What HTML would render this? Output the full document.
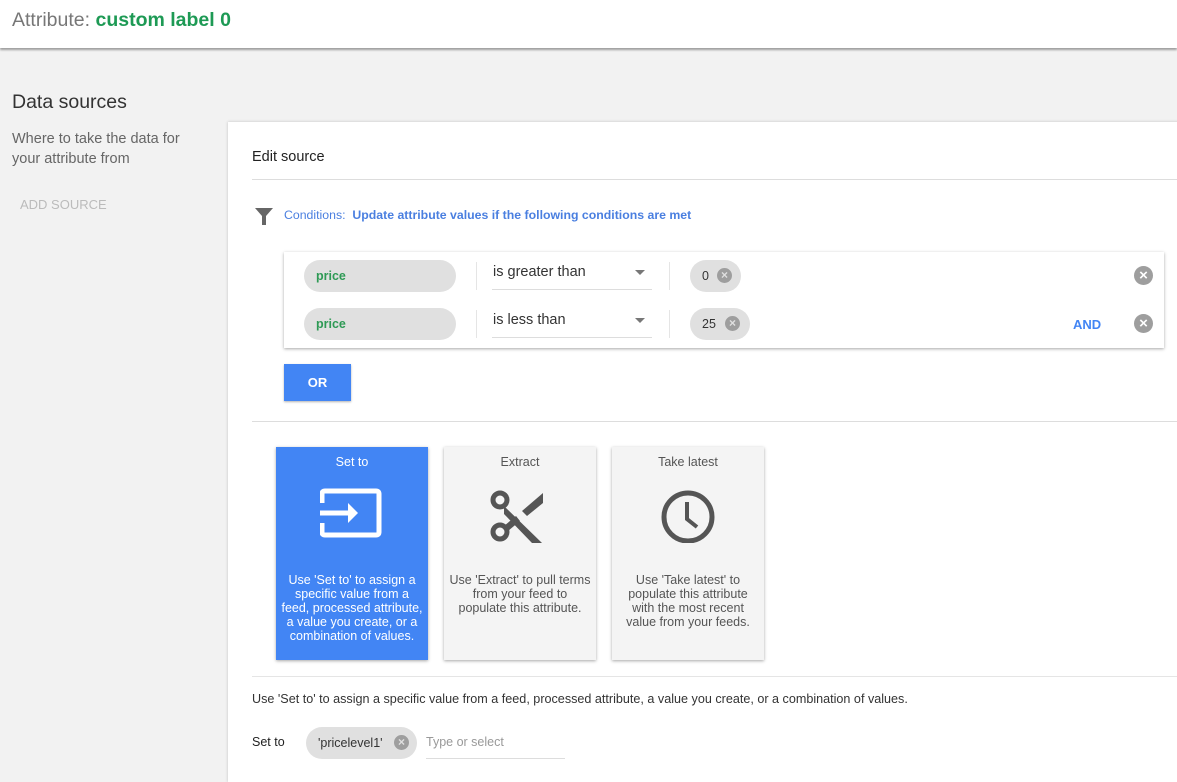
<!DOCTYPE html>
<html><head><meta charset="utf-8"><style>
*{margin:0;padding:0;box-sizing:border-box}
body{width:1177px;height:772px;overflow:hidden;background:#f2f2f2;font-family:"Liberation Sans",Arial,sans-serif;position:relative;color:#333}
.a{position:absolute;white-space:nowrap}
.hdr{position:absolute;left:0;top:0;width:1177px;height:48px;background:#fff;box-shadow:0 2px 2px rgba(0,0,0,.35)}
.panel{position:absolute;left:228px;top:122px;width:960px;height:660px;background:#fff;box-shadow:0 0 3px rgba(0,0,0,.2)}
.hl{position:absolute;left:252px;width:925px;height:1px;background:#ddd}
.chip{position:absolute;background:#e0e0e0;border-radius:16px;height:32px;font-size:12.5px}
.x{display:inline-block;width:15px;height:15px;border-radius:50%;background:#9e9e9e;position:absolute;color:#e0e0e0;font-size:12px;line-height:15px;text-align:center;font-weight:bold}
.card{position:absolute;top:447px;width:152px;height:213px;background:#f4f4f4;box-shadow:0 1px 3px rgba(0,0,0,.35);text-align:center;font-size:12.5px;color:#555}
.card .t{position:absolute;top:8px;left:0;right:0}
.card .d{position:absolute;top:126px;left:8px;right:8px;line-height:14px}
.card svg{position:absolute;left:44px;top:40px}
</style></head><body>
<div class="hdr"></div>
<div class="a" style="left:12px;top:9px;font-size:19.5px;color:#777">Attribute: <span style="color:#1e9a55;font-weight:bold">custom label 0</span></div>
<div class="a" style="left:12px;top:91px;font-size:19.5px;color:#333">Data sources</div>
<div class="a" style="left:12px;top:129px;font-size:14.5px;line-height:20px;color:#666">Where to take the data for<br>your attribute from</div>
<div class="a" style="left:20px;top:197px;font-size:13px;color:#bbb">ADD SOURCE</div>
<div class="panel"></div>
<div class="a" style="left:252px;top:149px;font-size:14.5px;color:#222">Edit source</div>
<div class="hl" style="top:179px"></div>
<svg class="a" style="left:255px;top:208px" width="18" height="17" viewBox="0 0 18 17"><path d="M0 0H18L11 8V17H7V8Z" fill="#666"/></svg>
<div class="a" style="left:284px;top:208px;font-size:12.3px;color:#4a7fe0">Conditions:&nbsp; <b>Update attribute values if the following conditions are met</b></div>
<div class="a" style="left:284px;top:252px;width:880px;height:96px;background:#fff;box-shadow:0 1px 3px rgba(0,0,0,.35)"></div>
<div class="chip" style="left:304px;top:260px;width:152px"><span class="a" style="left:12px;top:9px;color:#2e9a55;font-weight:bold">price</span></div>
<div class="a" style="left:476px;top:262px;width:1px;height:28px;background:#e5e5e5"></div>
<div class="a" style="left:493px;top:264px;font-size:14.5px;color:#333">is greater than</div>
<div class="a" style="left:635px;top:270px;border:5px solid transparent;border-top-color:#777;border-bottom:0"></div>
<div class="a" style="left:492px;top:289px;width:160px;height:1px;background:#ddd"></div>
<div class="a" style="left:669px;top:262px;width:1px;height:28px;background:#e5e5e5"></div>
<div class="chip" style="left:690px;top:260px;width:51px"><span class="a" style="left:12px;top:9px;color:#333">0</span><span class="x" style="left:27px;top:8px">×</span></div>
<span class="x" style="left:1134px;top:266px;width:19px;height:19px;line-height:19px;background:#9e9e9e;color:#fff;font-size:15px">×</span>
<div class="chip" style="left:304px;top:308px;width:152px"><span class="a" style="left:12px;top:9px;color:#2e9a55;font-weight:bold">price</span></div>
<div class="a" style="left:476px;top:310px;width:1px;height:28px;background:#e5e5e5"></div>
<div class="a" style="left:493px;top:312px;font-size:14.5px;color:#333">is less than</div>
<div class="a" style="left:635px;top:318px;border:5px solid transparent;border-top-color:#777;border-bottom:0"></div>
<div class="a" style="left:492px;top:337px;width:160px;height:1px;background:#ddd"></div>
<div class="a" style="left:669px;top:310px;width:1px;height:28px;background:#e5e5e5"></div>
<div class="chip" style="left:690px;top:308px;width:60px"><span class="a" style="left:12px;top:9px;color:#333">25</span><span class="x" style="left:35px;top:8px">×</span></div>
<div class="a" style="left:1073px;top:317px;font-size:13px;font-weight:bold;color:#4285f4">AND</div>
<span class="x" style="left:1134px;top:314px;width:19px;height:19px;line-height:19px;background:#9e9e9e;color:#fff;font-size:15px">×</span>
<div class="a" style="left:284px;top:364px;width:67px;height:37px;background:#4285f4;color:#fff;font-size:13px;font-weight:bold;text-align:center;line-height:37px;box-shadow:0 1px 2px rgba(0,0,0,.3)">OR</div>
<div class="hl" style="top:421px"></div>
<div class="card" style="left:276px;background:#4285f4;color:#fff">
<div class="t">Set to</div>
<svg width="64" height="56" viewBox="0 0 64 56" fill="none" stroke="#fff" stroke-width="5"><path d="M2 16V7Q2 4 5 4H56Q59 4 59 7V45Q59 48 56 48H5Q2 48 2 45V36"/><path d="M0 26H30" /><path d="M28 16L38 26L28 36Z" fill="#fff" stroke="none"/></svg>
<div class="d" style="left:4px;right:4px">Use 'Set to' to assign a specific value from a feed, processed attribute, a value you create, or a combination of values.</div></div>
<div class="card" style="left:444px">
<div class="t">Extract</div>
<svg width="64" height="56" viewBox="0 0 64 56"><g fill="none" stroke="#555" stroke-width="5"><circle cx="12" cy="13" r="7"/><circle cx="12" cy="45" r="7"/></g><path d="M16 19L54 56H44L16 27Z" fill="#555"/><path d="M16 39L28 29L32 34L20 44Z" fill="#555"/><path d="M34 24L55 6V16L39 29Z" fill="#555"/><circle cx="32" cy="30" r="1.5" fill="#f4f4f4"/></svg>
<div class="d" style="left:4px;right:4px">Use 'Extract' to pull terms from your feed to populate this attribute.</div></div>
<div class="card" style="left:612px">
<div class="t">Take latest</div>
<svg width="64" height="56" viewBox="0 0 64 56" fill="none" stroke="#555"><circle cx="32" cy="30" r="24" stroke-width="5"/><path d="M31 15V32L41 40" stroke-width="4"/></svg>
<div class="d" style="left:14px;right:14px">Use 'Take latest' to populate this attribute with the most recent value from your feeds.</div></div>
<div class="hl" style="top:676px;background:#e5e5e5"></div>
<div class="a" style="left:252px;top:692px;font-size:12.6px;color:#333">Use 'Set to' to assign a specific value from a feed, processed attribute, a value you create, or a combination of values.</div>
<div class="a" style="left:252px;top:735px;font-size:12.5px;color:#222">Set to</div>
<div class="chip" style="left:306px;top:727px;width:111px"><span class="a" style="left:12px;top:9px;color:#333">'pricelevel1'</span><span class="x" style="left:88px;top:8px">×</span></div>
<div class="a" style="left:426px;top:735px;font-size:12.5px;color:#999">Type or select</div>
<div class="a" style="left:426px;top:758px;width:139px;height:1px;background:#ddd"></div>
</body></html>
